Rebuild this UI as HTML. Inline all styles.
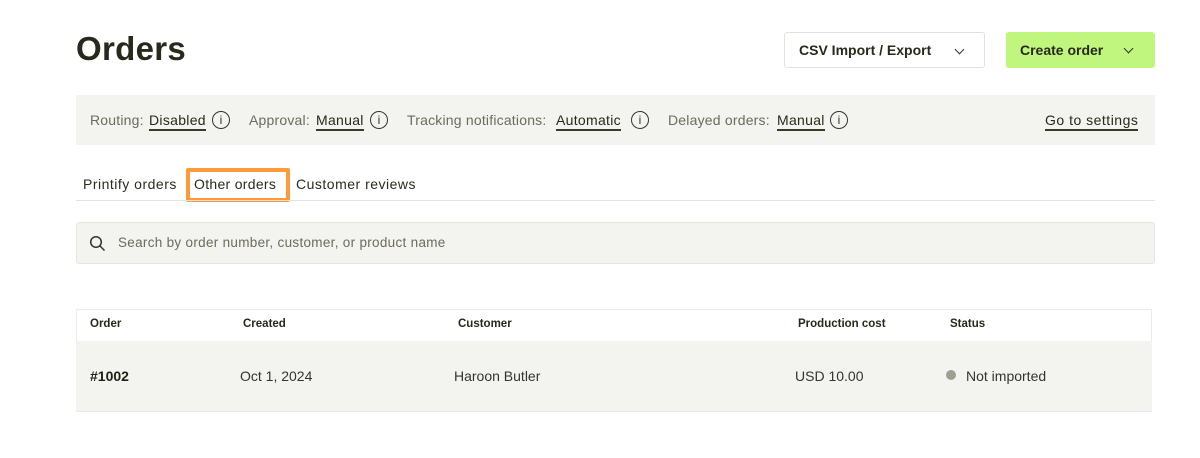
<!DOCTYPE html>
<html><head><style>
*{margin:0;padding:0;box-sizing:border-box}
body{width:1200px;height:458px;background:#fff;font-family:"Liberation Sans",sans-serif;color:#2b2b1f;position:relative;overflow:hidden}
.a{position:absolute;white-space:nowrap}
h1{position:absolute;left:76px;top:30px;font-size:33px;font-weight:bold;color:#28291a;letter-spacing:0.3px}
.btn{position:absolute;top:32px;height:36px;border-radius:3px;font-size:14px;font-weight:bold;display:flex;align-items:center;padding-left:14px;color:#28291a}
.chev{position:absolute;width:7px;height:7px;border-right:1.4px solid #333;border-bottom:1.4px solid #333;transform:rotate(45deg)}
.bar{position:absolute;left:76px;top:95px;width:1079px;height:50px;background:#f3f3ef}
.l{position:absolute;top:112px;font-size:14px;color:#6b6b5e;white-space:nowrap;letter-spacing:0.2px}
.v{position:absolute;top:112px;font-size:14px;color:#28291a;white-space:nowrap;border-bottom:2px solid #3a3a2a;line-height:16px;padding-bottom:1px;letter-spacing:0.3px}
.i{position:absolute;top:111px;width:18px;height:18px;border:1.3px solid #333;border-radius:50%;font-size:12px;text-align:center;line-height:16px;color:#333}
.tab{position:absolute;top:176px;font-size:14px;color:#2b2b1f;letter-spacing:0.5px;white-space:nowrap}
.th{position:absolute;top:318px;font-size:11.5px;font-weight:bold;color:#28291a}
.td{position:absolute;top:368px;font-size:14px;color:#333}
</style></head><body>
<h1>Orders</h1>
<div class="btn" style="left:784px;width:201px;border:1px solid #e2e2dc;background:#fff">CSV Import / Export<div class="chev" style="left:171px;top:13px"></div></div>
<div class="btn" style="left:1006px;width:149px;background:#c0f57e">Create order<div class="chev" style="left:119px;top:13px"></div></div>
<div class="bar"></div>
<div class="l" style="left:90px">Routing:</div><div class="v" style="left:149px">Disabled</div><div class="i" style="left:212px">i</div>
<div class="l" style="left:249px">Approval:</div><div class="v" style="left:316px">Manual</div><div class="i" style="left:370px">i</div>
<div class="l" style="left:407px">Tracking notifications:</div><div class="v" style="left:556px">Automatic</div><div class="i" style="left:631px">i</div>
<div class="l" style="left:668px">Delayed orders:</div><div class="v" style="left:777px">Manual</div><div class="i" style="left:830px">i</div>
<div class="v" style="left:1045px;letter-spacing:0.5px">Go to settings</div>
<div class="tab" style="left:83px">Printify orders</div>
<div class="a" style="left:186px;top:168px;width:104px;height:34px;border:4px solid #ff9a3c;border-radius:2px"></div>
<div class="tab" style="left:194px;letter-spacing:0.3px">Other orders</div>
<div class="tab" style="left:296px">Customer reviews</div>
<div class="a" style="left:76px;top:200px;width:1079px;height:1px;background:#e4e4df"></div>
<div class="a" style="left:76px;top:222px;width:1079px;height:42px;background:#f3f3ef;border:1px solid #e6e6e0;border-radius:3px"></div>
<svg class="a" style="left:89px;top:235px" width="17" height="17" viewBox="0 0 17 17"><circle cx="7" cy="7" r="5.3" fill="none" stroke="#333" stroke-width="1.5"/><line x1="11" y1="11" x2="15.5" y2="15.5" stroke="#333" stroke-width="1.5"/></svg>
<div class="a" style="left:118px;top:235px;font-size:13.5px;color:#6b6b5e;letter-spacing:0.3px">Search by order number, customer, or product name</div>
<div class="a" style="left:76px;top:309px;width:1076px;height:103px;border:1px solid #ecece7"></div>
<div class="a" style="left:76px;top:341px;width:1076px;height:70px;background:#f3f3ef"></div>
<div class="th" style="left:90px">Order</div>
<div class="th" style="left:243px">Created</div>
<div class="th" style="left:458px">Customer</div>
<div class="th" style="left:798px">Production cost</div>
<div class="th" style="left:950px">Status</div>
<div class="td" style="left:90px;font-weight:bold;color:#1f1f14">#1002</div>
<div class="td" style="left:240px">Oct 1, 2024</div>
<div class="td" style="left:454px">Haroon Butler</div>
<div class="td" style="left:795px">USD 10.00</div>
<div class="a" style="left:946px;top:370px;width:10px;height:10px;border-radius:50%;background:#9e9e92"></div>
<div class="td" style="left:966px">Not imported</div>
</body></html>
